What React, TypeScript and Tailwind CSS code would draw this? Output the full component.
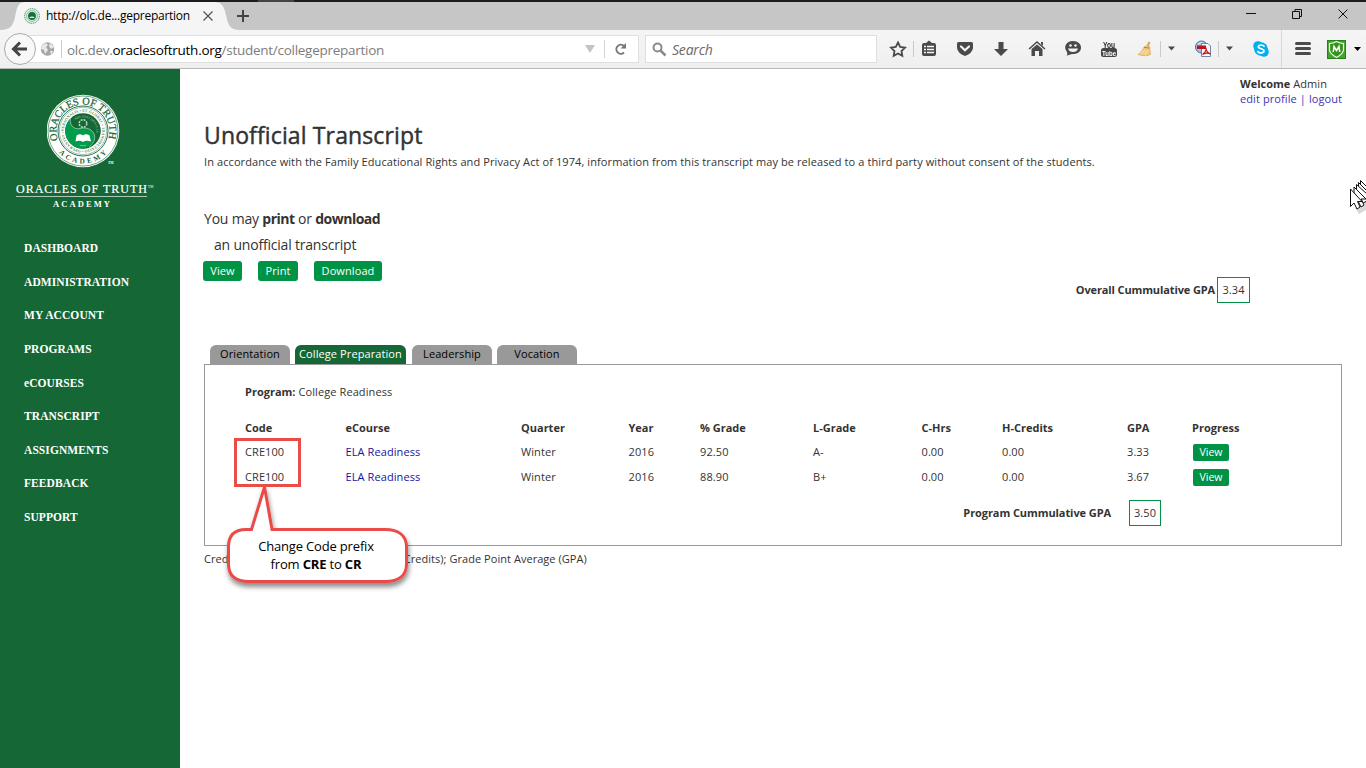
import React from "react";

const NAV = ["DASHBOARD", "ADMINISTRATION", "MY ACCOUNT", "PROGRAMS", "eCOURSES", "TRANSCRIPT", "ASSIGNMENTS", "FEEDBACK", "SUPPORT"];

const ROWS = [
  ["CRE100", "ELA Readiness", "Winter", "2016", "92.50", "A-", "0.00", "0.00", "3.33"],
  ["CRE100", "ELA Readiness", "Winter", "2016", "88.90", "B+", "0.00", "0.00", "3.67"],
];
const HEAD = ["Code", "eCourse", "Quarter", "Year", "% Grade", "L-Grade", "C-Hrs", "H-Credits", "GPA", "Progress"];
const GRID = "grid grid-cols-[100.5px_175.5px_107.5px_71.5px_113px_108.5px_80.5px_125px_65px_60px] items-center";

function Seal() {
  return (
    <svg width="76" height="74" viewBox="0 0 76 74" className="block" fontFamily="Liberation Serif, serif">
      <defs>
        <path id="outerTop" d="M11.1 46.060 A26.500 26.500 0 1 1 60.900 46.060" />
        <path id="outerBottom" d="M11.1 57.900 A32.500 32.500 0 0 0 60.900 57.900" />
        <path id="inner" d="M16.800 37 A19.200 19.200 0 0 1 55.200 37 A19.200 19.200 0 0 1 16.800 37" />
        <path id="coreTop" d="M28.260 25.940 A13.500 13.500 0 0 1 49.300 39.300" />
      </defs>
      <circle cx="36" cy="37" r="36.300" fill="#fff" />
      <circle cx="36" cy="37" r="35" fill="none" stroke="#156735" strokeWidth=".6" />
      <circle cx="36" cy="37" r="25" fill="none" stroke="#156735" strokeWidth=".9" />
      <circle cx="36" cy="37" r="23.600" fill="none" stroke="#156735" strokeWidth=".4" />
      <circle cx="36" cy="37" r="17.800" fill="#156735" />
      <path d="M36 54.800 A17.800 17.800 0 0 1 23.500 24.300 C22 31 27 36 33 34.500 C40 32.500 46 36 47.500 41 C48.500 46 46 52 36 54.800Z" fill="#009b4b" />
      <path d="M23.500 24.300 C22 31 27 36 33 34.500 C40 32.500 46 36 47.500 41 C48.500 46 46 50 42 53" fill="none" stroke="#d5eadc" strokeWidth=".6" />
      <circle cx="36" cy="29.500" r="3.800" fill="none" stroke="#b9d9c5" strokeWidth="1.500" strokeDasharray="2 1" />
      <path d="M29.500 41.500 Q33 39 36 41.500 Q39 39 42.500 41.500 L44 47.500 Q39 46 36 48 Q33 46 28.500 47.500Z" fill="#fff" />
      <text fontSize="10.300" fill="#156735" stroke="#156735" strokeWidth=".25"><textPath href="#outerTop" textLength="100">ORACLES OF TRUTH</textPath></text>
      <text fontSize="7.200" fontWeight="700" fill="#156735"><textPath href="#outerBottom" startOffset="1" textLength="54">ACADEMY</textPath></text>
      <text fontSize="3.800" fontWeight="700" fill="#4c8a62"><textPath href="#inner" textLength="119">PERSONALIS • ET GLOBAL • TRANSMUTATIO • OPERANTES •</textPath></text>
      <text fontSize="3" fill="#b9d9c5"><textPath href="#coreTop" textLength="31">NOS SUNT ORACULA</textPath></text>
      <text x="33" y="52" fontSize="2.800" fill="#fff">2010</text>
      <text x="61" y="69.500" fontSize="3.500" fontWeight="700" fill="#fff">TM</text>
    </svg>
  );
}

function Favicon() {
  return (
    <svg width="16" height="16" viewBox="0 0 16 16" className="shrink-0">
      <circle cx="8" cy="8" r="7.400" fill="#dff0e6" stroke="#3e8a5b" strokeWidth=".9" strokeDasharray="1.500 .8" />
      <circle cx="8" cy="8" r="5.400" fill="none" stroke="#7cb593" strokeWidth=".8" />
      <circle cx="8" cy="8" r="3.900" fill="#156f3b" />
      <path d="M5.800 9 Q8 7.800 10.200 9 L10.200 10 Q8 9.300 5.800 10Z" fill="#fff" />
    </svg>
  );
}

function ToolbarIcons() {
  return (
    <svg width="490" height="38" viewBox="876 30 490 38" className="block" fill="#4a4a4a">
      <path d="M898 42.500 L900.200 46.900 L905 47.600 L901.500 51 L902.300 55.800 L898 53.500 L893.700 55.800 L894.500 51 L891 47.600 L895.800 46.900Z" fill="none" stroke="#4a4a4a" strokeWidth="1.800" />
      <path d="M913.500 41V57" stroke="#c9c9c9" />
      <path d="M924 43 H926 L929 40.500 L932 43 H934 Q936 43 936 45 V54 Q936 56 934 56 H924 Q922 56 922 54 V45 Q922 43 924 43Z" />
      <path d="M924 46.500H926M927 46.500H934M924 49.500H926M927 49.500H934M924 52.500H926M927 52.500H934" stroke="#f3f3f3" strokeWidth="1.400" />
      <path d="M958.500 42 H971.500 Q973 42 973 43.500 V48 Q972.500 53 965 56 Q957.500 53 957 48 V43.500 Q957 42 958.500 42Z" />
      <path d="M961 46.500 L965 50.300 L969 46.500" fill="none" stroke="#f3f3f3" strokeWidth="2.200" strokeLinecap="round" />
      <path d="M998.500 42 H1003.500 V49 H1008 L1001 56 L994 49 H998.500Z" />
      <path d="M1029 49 L1037 42 L1045 49" fill="none" stroke="#4a4a4a" strokeWidth="1.500" />
      <path d="M1031.500 49 L1037 44.500 L1042.500 49 V56 H1039 V51 H1035 V56 H1031.500Z M1041 42H1043V46L1041 44Z" />
      <path d="M1073 41 C1078 41 1081 44 1081 47.500 C1081 51.500 1078 54 1073 54 C1070 54 1069 55.500 1066.500 55.500 C1067.500 54.500 1067.500 53.500 1067 52 C1063 47 1066 41 1073 41Z" />
      <circle cx="1070.500" cy="45.500" r="1.300" fill="#f3f3f3" /><circle cx="1075.500" cy="45.500" r="1.300" fill="#f3f3f3" />
      <path d="M1068 48.500 H1078 Q1077 52 1073 52 Q1069 52 1068 48.500Z" fill="#f3f3f3" />
      <g opacity=".99">
        <text x="1103" y="47.500" fontSize="8.500" fontWeight="700" fontFamily="Liberation Sans, sans-serif" textLength="12" lengthAdjust="spacingAndGlyphs" fill="#222">You</text>
        <rect x="1101" y="48" width="16" height="9" rx="2.500" fill="#444" />
        <text x="1102" y="55.500" fontSize="8" fontWeight="700" fontFamily="Liberation Sans, sans-serif" textLength="14" lengthAdjust="spacingAndGlyphs" fill="#fff">Tube</text>
      </g>
      <path d="M1149.500 42 L1147.500 46" stroke="#d9a85a" strokeWidth="2.200" />
      <path d="M1144 47 Q1147 44.500 1149.500 46.500 L1150.500 54.500 Q1146 57 1138 54.500 Q1143 51 1144 47Z" fill="#f2cb7c" stroke="#d3a052" strokeWidth=".6" />
      <path d="M1144 47.500 L1149.500 48" stroke="#c57a4e" strokeWidth="1.200" /><path d="M1141 54 L1145 50 M1145 54.500 L1147.500 50" stroke="#fae4ae" />
      <path d="M1160.500 41V57M1218.500 41V57" stroke="#c9c9d0" />
      <path d="M1168 46.500 H1175 L1171.500 50.500Z M1226 46.500 H1233 L1229.500 50.500Z" />
      <circle cx="1201.500" cy="47" r="6" fill="#9cc3e9" stroke="#466ea8" />
      <path d="M1198 44 Q1202 41 1205 45 M1197 48 H1202" stroke="#e5f2fc" fill="none" />
      <path d="M1201.500 43.500 H1208 L1210.500 46 V56.500 H1201.500Z" fill="#fafafa" stroke="#55688f" strokeWidth=".8" />
      <rect x="1197" y="45.500" width="9" height="3.500" fill="#c80f16" />
      <path d="M1202.500 54.500 Q1207 51 1206 48 Q1206 52 1210.500 54 Q1207 52 1202.500 54.500Z" fill="none" stroke="#c80f16" strokeWidth="1.200" />
      <circle cx="1258" cy="46" r="4.800" fill="#00aff0" /><circle cx="1264" cy="52" r="4.800" fill="#00aff0" /><circle cx="1261" cy="49" r="6.800" fill="#00aff0" />
      <path d="M1264 46.300 C1262.500 44.300 1258.500 44.700 1258.300 46.800 C1258.300 49.300 1264 48.300 1264 51 C1263.800 53.500 1259 53.500 1257.800 51.500" fill="none" stroke="#fff" strokeWidth="1.700" strokeLinecap="round" />
      <path d="M1281.500 30V68" stroke="#d8d8d8" />
      <path d="M1296.500 43.500H1309.500M1296.500 48.500H1309.500M1296.500 53.500H1309.500" stroke="#4a4a4a" strokeWidth="3" strokeLinecap="round" />
      <rect x="1327.500" y="40.500" width="18" height="18" fill="#43a52b" stroke="#23801b" />
      <path d="M1329.500 43.500 Q1333 43.500 1336.500 41.500 Q1340 43.500 1343.500 43.500 V50 Q1343 54 1336.500 57.500 Q1330 54 1329.500 50Z" fill="#35931f" stroke="#f3fff0" strokeWidth="1.200" />
      <path d="M1333.300 52 L1334 46.500 L1336.500 50.500 L1339 46.500 L1339.700 52" fill="none" stroke="#fff" strokeWidth="1.500" />
      <path d="M1354 47 H1361 L1357.500 51Z" fill="#000" />
    </svg>
  );
}

function BrowserChrome() {
  return (
    <header className="h-[69px] font-['Open_Sans',sans-serif]">
      <div className="flex h-[2px] bg-[#1c1c1c]"><div className="ml-[258px] w-9 bg-[#444]" /></div>
      <div className="flex h-7 items-center bg-[#c6c6c6]">
        <div className="relative h-7 w-[232px]">
          <svg width="240" height="28" className="block"><path d="M0 28 C10 28 13 24 15 15 C17 4 18 0 26 0 H214 C222 0 224 4 226 13 C228 24 231 28 240 28Z" fill="#f5f5f5" /></svg>
          <div className="absolute inset-0 flex items-center pl-6">
            <Favicon />
            <span className="ml-[6px] w-[154px] whitespace-nowrap text-[12px] tracking-[-0.25px] text-black">http://olc.de...geprepartion</span>
            <svg width="16" height="16" className="block"><path d="M3.500 3.500 L12.500 12.500 M12.500 3.500 L3.500 12.500" stroke="#555" strokeWidth="1.300" /></svg>
          </div>
        </div>
        <svg width="22" height="28" className="block"><path d="M5 14H17M11 8V20" stroke="#444" strokeWidth="2" /></svg>
        <svg width="130" height="28" className="ml-auto block"><path d="M10 11.500H20M56.500 9.500H63.500V16.500H56.500ZM59 9V7.500H65.500V14.500H64M102.500 7.500L111.500 16.500M111.500 7.500L102.500 16.500" fill="none" stroke="#111" /></svg>
      </div>
      <div className="relative flex h-[39px] border-b border-[#b8b8b8] bg-linear-to-b from-[#f5f5f5] to-[#efefef] pt-[5px]">
        <div className="ml-[18px] flex h-7 w-[621px] items-center border border-[#dfdfdf] bg-white">
          <svg width="15" height="16" className="ml-[21px] shrink-0"><circle cx="7.500" cy="8" r="6.700" fill="#a5a5a5" /><path d="M2 4 L6 2 L8 4 L6 6 L8 9 L5 13 L4 9 L1 8Z M10 2 L14 6 L11 8 L9 5Z M10 10 L13 10 L11 14Z" fill="#e9e9e9" /></svg>
          <div className="mr-[5px] ml-[6px] h-[18px] w-px shrink-0 bg-[#ccc]" />
          <div className="mt-[2px] w-[516px] shrink-0 whitespace-nowrap text-[13.5px] leading-5 tracking-[-0.27px] text-[#7d7d7d]">olc.dev.<span className="text-black">oraclesoftruth.org</span>/student/collegeprepartion</div>
          <svg width="14" height="12" className="shrink-0"><path d="M2 2H12L7 10Z" fill="#c4c4c4" /></svg>
          <div className="ml-[7px] h-[18px] w-px shrink-0 bg-[#d5d5d5]" />
          <svg width="16" height="16" className="ml-[8px] shrink-0"><path d="M11 11.500 A4.500 4.500 0 1 1 11 5" fill="none" stroke="#777" strokeWidth="2" /><path d="M13 2V7.500H7.500Z" fill="#777" /></svg>
        </div>
        <div className="ml-[6px] flex h-7 w-[232px] items-center border border-[#dfdfdf] bg-white pl-[6px]">
          <svg width="15" height="15"><circle cx="5.500" cy="5.500" r="4" fill="none" stroke="#8a8a8a" strokeWidth="2" /><path d="M8.500 8.500L13.500 13.500" stroke="#8a8a8a" strokeWidth="2.500" /></svg>
          <span className="mt-px ml-[5px] text-[14px] italic tracking-[-0.2px] text-[#6a6a6a]">Search</span>
        </div>
        <div className="absolute top-[2px] left-1"><svg width="32" height="34"><circle cx="16" cy="17" r="15.500" fill="#f8f8f8" stroke="#aaa" /><path d="M23 17H10M16 10.500L9.500 17L16 23.500" fill="none" stroke="#454545" strokeWidth="3" /></svg></div>
        <div className="absolute top-0 left-[876px]"><ToolbarIcons /></div>
      </div>
    </header>
  );
}

function Callout() {
  return (
    <div className="absolute top-[366px] left-[44px] h-[160px] w-[200px]">
      <svg width="200" height="160" className="absolute overflow-visible">
        <defs><filter id="shade" x="-10%" y="-10%" width="125%" height="130%"><feDropShadow dx="1" dy="4" stdDeviation="2.500" floodColor="#000" floodOpacity=".45" /></filter></defs>
        <path d="M22 94.500 H27.500 L40.500 52 L48 94.500 H161 C175 94.500 182.500 101 182.500 112 V129 C182.500 140 175 146.500 161 146.500 H25 C11 146.500 4.500 140 4.500 129 V112 C4.500 101 10 94.500 22 94.500Z" fill="#fff" stroke="#ea4c48" strokeWidth="3" filter="url(#shade)" />
        <rect x="11.500" y="4.500" width="64" height="46" fill="none" stroke="#ea4c48" strokeWidth="3" />
      </svg>
      <div className="relative pt-[102px] pl-[4px] text-center text-[13px] leading-[18px] text-black">
        <div className="w-[176px] tracking-[-0.17px]">Change Code prefix<br />from <b>CRE</b> to <b>CR</b></div>
      </div>
    </div>
  );
}

const BTN = "flex h-5 items-center justify-center rounded-[3px] bg-[#009245] pb-[2px] text-[11px] text-white";

export default function App() {
  return (
    <div className="flex h-[768px] w-[1366px] flex-col overflow-hidden bg-white">
      <BrowserChrome />
      <div className="flex flex-1">
        <aside className="w-[180px] bg-[#156735] text-white">
          <div className="pt-[25px] pl-[46.5px]"><Seal /></div>
          <svg width="180" height="38" viewBox="0 0 180 38" className="mt-[9px] block" fontFamily="Liberation Serif, serif" fill="#fff">
            <text x="16" y="16" fontSize="12" stroke="#fff" strokeWidth=".2" textLength="131">ORACLES OF TRUTH</text>
            <text x="148" y="11" fontSize="3.500">TM</text>
            <path d="M16 19.500H147" stroke="#a9c8b5" />
            <text x="53" y="30" fontSize="8.500" fontWeight="700" textLength="57">ACADEMY</text>
          </svg>
          <nav className="pt-[17.3px] pl-6 font-['Liberation_Serif',serif] text-[11.5px] font-bold tracking-[0.08px]">
            {NAV.map((label) => <div key={label} className="h-[33.6px] leading-[33.6px]">{label}</div>)}
          </nav>
        </aside>
        <main className="relative w-[1186px] pl-6 font-['Open_Sans',sans-serif] text-[11px] leading-[15px] tracking-[0.093px] text-[#333]">
          <div className="mt-[7px] ml-[1036px] h-[30px] whitespace-nowrap"><b className="tracking-normal">Welcome</b> Admin<br /><span className="text-[#3a35b5]">edit profile | logout</span></div>
          <h1 className="mt-[11px] h-[37px] text-[23px] leading-9 font-medium tracking-[0.13px] [-webkit-text-stroke:0.45px_#333]">Unofficial Transcript</h1>
          <p className="h-[15px] whitespace-nowrap">In accordance with the Family Educational Rights and Privacy Act of 1974, information from this transcript may be released to a third party without consent of the students.</p>
          <div className="mt-[37px] text-[14px] leading-[26px] tracking-[-0.2px]">You may <b className="tracking-[-0.5px]">print</b> or <b className="tracking-[-0.5px]">download</b></div>
          <div className="pl-[10px] text-[14px] leading-[26px] tracking-[-0.2px]">an unofficial transcript</div>
          <div className="-ml-px mt-[3px] flex gap-4">
            <button className={`${BTN} w-[39px]`}>View</button><button className={`${BTN} w-10`}>Print</button><button className={`${BTN} w-[68px]`}>Download</button>
          </div>
          <div className="-mt-1 flex h-[26px] w-[1046px] items-center justify-end">
            <b className="pb-[2px] tracking-[-0.12px]">Overall Cummulative GPA</b><span className="ml-[2px] flex h-[26px] w-[33px] items-center justify-center border border-[#009245] pb-[2px]">3.34</span>
          </div>
          <div className="mt-[42px] ml-[6px] flex h-[19px] text-black">
            <div className="mr-[5px] w-20 rounded-t-[6px] bg-[#999] text-center leading-[18px]">Orientation</div>
            <div className="mr-[6px] w-[111px] rounded-t-[6px] bg-[#156735] text-center leading-[18px] whitespace-nowrap text-white">College Preparation</div>
            <div className="mr-[5px] w-20 rounded-t-[6px] bg-[#999] text-center leading-[18px]">Leadership</div>
            <div className="w-20 rounded-t-[6px] bg-[#999] text-center leading-[18px]">Vocation</div>
          </div>
          <section className="h-[182px] w-[1138px] border border-[#999] pl-10">
            <div className="mt-[19px] h-[15px]"><b className="tracking-normal">Program:</b> College Readiness</div>
            <div className={`${GRID} mt-4 h-6 font-bold tracking-normal`}>{HEAD.map((h) => <div key={h}>{h}</div>)}</div>
            {ROWS.map((row, r) => (
              <div key={r} className={`${GRID} h-[25px]`}>
                {row.map((cell, i) => <div key={i} className={i === 1 ? "text-[#1515a0]" : ""}>{cell}</div>)}
                <button className="mt-px ml-px flex h-[17px] w-9 items-center justify-center rounded-[2px] bg-[#009245] text-[10.5px] tracking-normal text-white">View</button>
              </div>
            ))}
            <div className="mt-[11px] flex h-[26px] w-[916px] items-center justify-end">
              <b className="mr-px pb-[2px] tracking-[-0.08px]">Program Cummulative GPA</b><span className="ml-[17px] flex h-[26px] w-8 items-center justify-center border border-[#009245] pb-[2px]">3.50</span>
            </div>
          </section>
          <p className="mt-[5px] whitespace-nowrap tracking-[0.045px]">Credit Hours (C-Hrs); Honor Credits (H-Credits); Grade Point Average (GPA)</p>
          <Callout />
          <svg width="17" height="36" viewBox="0 0 17 36" className="absolute top-[110px] right-0">
            <path d="M6 29 L10 35 L17 31 V20Z" fill="#000" opacity=".15" />
            <g fill="#fff" stroke="#111" strokeWidth="1">
              <path d="M11.500 1.500V17L15 14L18 20V8Z" /><path d="M9.500 3.500V19L13 16L16 22L18 20V12Z" /><path d="M7.500 5.500V21L11 18L14 24L18 22V15Z" /><path d="M5 8V24L8.500 21L12 28L15 26L12 20H17Z" />
              <path d="M1.500 10V27.500L5 24L8 30L11 28L8.500 22.500H13Z" />
            </g>
          </svg>
        </main>
      </div>
    </div>
  );
}
